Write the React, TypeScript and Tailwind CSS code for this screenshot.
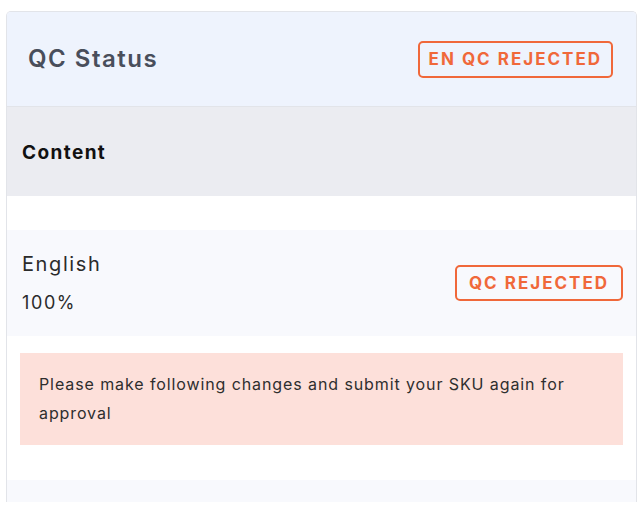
export default function App() {
  return (
    <div className="h-[511px] w-[642px] overflow-hidden bg-white pl-[6px] pt-[11px] font-['Inter',sans-serif]">
      <div className="flex h-[491px] w-[631px] flex-col overflow-hidden rounded-t-[5px] border border-b-0 border-[#e2e4e9]">
        <div className="flex h-[95px] shrink-0 items-center justify-between border-b border-[#e2e4e9] bg-[#eef3fd] pl-[21px] pr-[23px]">
          <h2 className="text-[24px] font-semibold tracking-[1.5px] text-[#494e5b]">QC Status</h2>
          <span className="rounded-[5px] border-2 border-[#f0683a] px-[9px] py-[3px] text-[17px] font-bold leading-[27px] tracking-[2px] text-[#f0683a]">
            EN QC REJECTED
          </span>
        </div>

        <div className="flex h-[89px] shrink-0 items-center bg-[#ebecf1] px-[15px] pt-[4px]">
          <span className="text-[19px] font-bold tracking-[1.4px] text-[#111]">Content</span>
        </div>

        <div className="h-[34px] shrink-0" />

        <div className="flex h-[106px] shrink-0 items-center justify-between bg-[#f8f9fd] pl-[15px] pr-[13px]">
          <div className="flex flex-col gap-[12px] text-[#2b2b2b]">
            <span className="text-[20px] leading-[28px] tracking-[1.6px]">English</span>
            <span className="text-[18px] leading-[26px] tracking-[1.6px]">100%</span>
          </div>
          <span className="rounded-[5px] border-2 border-[#f0683a] px-[12px] py-[3px] text-[17px] font-bold leading-[26px] tracking-[2px] text-[#f0683a]">
            QC REJECTED
          </span>
        </div>

        <div className="mx-[13px] mt-[17px] flex h-[92px] shrink-0 items-center bg-[#fde0da] pl-[19px] pr-[12px]">
          <p className="text-[16px] leading-[29px] tracking-[0.9px] text-[#2e2e2e]">
            Please make following changes and submit your SKU again for approval
          </p>
        </div>

        <div className="mt-[35px] flex-1 bg-[#f8f9fd]" />
      </div>
    </div>
  )
}
